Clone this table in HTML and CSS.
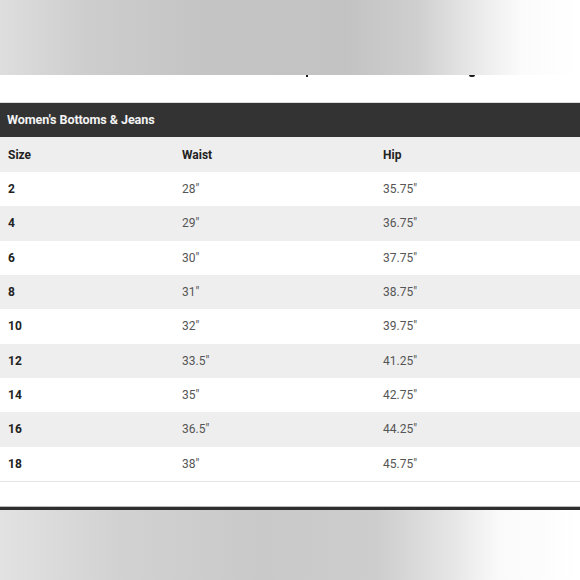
FILE: index.html
```html
<!DOCTYPE html>
<html>
<head>
<meta charset="utf-8">
<link rel="stylesheet" href="styles.css">
</head>
<body>
<div class="band band-top"></div>
<div class="gap-top">
  <div class="clipped"><span class="mark mark-a"></span><span class="mark mark-b"></span></div>
</div>
<div class="chart">
  <div class="title">Women's Bottoms &amp; Jeans</div>
  <div class="row head"><div class="cell">Size</div><div class="cell">Waist</div><div class="cell">Hip</div></div>
  <div class="row"><div class="cell size">2</div><div class="cell">28"</div><div class="cell">35.75"</div></div>
  <div class="row alt"><div class="cell size">4</div><div class="cell">29"</div><div class="cell">36.75"</div></div>
  <div class="row"><div class="cell size">6</div><div class="cell">30"</div><div class="cell">37.75"</div></div>
  <div class="row alt"><div class="cell size">8</div><div class="cell">31"</div><div class="cell">38.75"</div></div>
  <div class="row"><div class="cell size">10</div><div class="cell">32"</div><div class="cell">39.75"</div></div>
  <div class="row alt"><div class="cell size">12</div><div class="cell">33.5"</div><div class="cell">41.25"</div></div>
  <div class="row"><div class="cell size">14</div><div class="cell">35"</div><div class="cell">42.75"</div></div>
  <div class="row alt"><div class="cell size">16</div><div class="cell">36.5"</div><div class="cell">44.25"</div></div>
  <div class="row last"><div class="cell size">18</div><div class="cell">38"</div><div class="cell">45.75"</div></div>
</div>
<div class="gap-bottom"></div>
<div class="rule"></div>
<div class="band band-bottom"></div>
</body>
</html>
```
FILE: styles.css
```css
html, body {
  margin: 0;
  padding: 0;
  background: #fff;
  font-family: Roboto, "Liberation Sans", sans-serif;
}
body {
  width: 580px;
  height: 580px;
  overflow: hidden;
}
.band {
  width: 100%;
}
.band-top {
  height: 75px;
  background: linear-gradient(to right, #dedede 0%, #cdcdcd 15%, #c4c4c4 35%, #c3c3c3 60%, #cfcfcf 72%, #eeeeee 84%, #fbfbfb 90%, #ffffff 100%);
}
.gap-top {
  height: 27px;
  border-bottom: 1px solid #dcdcdc;
}
.clipped {
  height: 4px;
  position: relative;
}
.mark {
  position: absolute;
  top: 0;
  background: #1a1a1a;
}
.mark-a {
  left: 306px;
  width: 2px;
  height: 2px;
}
.mark-b {
  left: 469px;
  width: 6px;
  height: 2px;
  border-radius: 0 0 3px 3px;
}
.title {
  height: 34px;
  background: #333333;
  color: #f4f4f4;
  font-weight: 700;
  font-size: 12.6px;
  line-height: 34px;
  padding-left: 7px;
  letter-spacing: -0.1px;
}
.row {
  display: grid;
  grid-template-columns: 174px 201px 1fr;
  height: 34.33px;
  align-items: center;
  background: #ffffff;
}
.row.head {
  height: 35px;
  background: #eeeeee;
}
.row.alt {
  background: #eeeeee;
}
.row.last {
  border-bottom: 1px solid #e4e4e4;
}
.cell {
  padding-left: 8px;
  font-size: 12px;
  color: #555;
}
.head .cell {
  font-weight: 700;
  color: #222;
}
.cell.size {
  font-weight: 700;
  color: #222;
}
.gap-bottom {
  height: 24px;
}
.rule {
  height: 3px;
  background: #2e2e2e;
  border-top: 1px solid #bbb;
}
.band-bottom {
  height: 72px;
  background: linear-gradient(to right, #e2e2e2 0%, #d2d2d2 20%, #c9c9c9 45%, #cdcdcd 65%, #e6e6e6 78%, #fafafa 86%, #ffffff 100%);
}
```
